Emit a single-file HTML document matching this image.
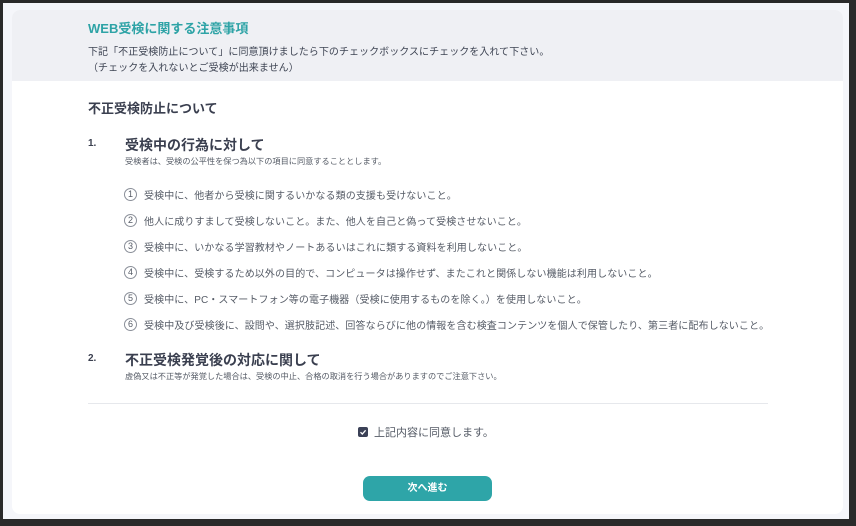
<!DOCTYPE html>
<html><head><meta charset="utf-8"><style>
*{margin:0;padding:0;box-sizing:border-box}
body{width:856px;height:526px;background:#2a2a2a;position:relative;overflow:hidden;font-family:"Liberation Sans","Noto Sans CJK JP",sans-serif;color:#3a3f4f}
.outer{position:absolute;left:3px;top:3px;width:846px;height:516px;background:#f5f6fa}
.card{position:absolute;left:12px;top:10px;width:831px;height:504px;background:#fff;border-radius:8px;overflow:hidden}
.hd{position:absolute;left:0;top:0;width:100%;height:71px;background:#eff0f4}
.a{position:absolute;white-space:nowrap}
.t{left:76px;top:8px;font-size:13px;font-weight:bold;color:#2ea3a6}
.s{font-size:10px;color:#3e4453;letter-spacing:0.05px}
.it{font-size:10px;color:#555b66;letter-spacing:0.1px;display:flex;align-items:center;height:16px}
.c{display:inline-block;width:13px;height:13px;border:1px solid #8a8f99;border-radius:50%;font-size:9px;text-align:center;line-height:11px;margin-right:7px;color:#555b66;flex:none}
.sm{font-size:8.2px;color:#555b66}
</style></head><body>
<div class="outer"></div>
<div class="card">
 <div class="hd"></div>
 <div class="a t">WEB受検に関する注意事項</div>
 <div class="a s" style="left:76px;top:33px">下記「不正受検防止について」に同意頂けましたら下のチェックボックスにチェックを入れて下さい。</div>
 <div class="a s" style="left:76px;top:49px">（チェックを入れないとご受検が出来ません）</div>
 <div class="a" style="left:76px;top:88px;font-size:13px;font-weight:bold">不正受検防止について</div>
 <div class="a" style="left:76px;top:128px;font-size:10px;font-weight:bold">1.</div>
 <div class="a" style="left:113px;top:125px;font-size:14px;font-weight:bold">受検中の行為に対して</div>
 <div class="a sm" style="left:113px;top:145px">受検者は、受検の公平性を保つ為以下の項目に同意することとします。</div>
 <div class="a it" style="left:112px;top:176px"><span class="c">1</span>受検中に、他者から受検に関するいかなる類の支援も受けないこと。</div>
 <div class="a it" style="left:112px;top:202px"><span class="c">2</span>他人に成りすまして受検しないこと。また、他人を自己と偽って受検させないこと。</div>
 <div class="a it" style="left:112px;top:228px"><span class="c">3</span>受検中に、いかなる学習教材やノートあるいはこれに類する資料を利用しないこと。</div>
 <div class="a it" style="left:112px;top:254px"><span class="c">4</span>受検中に、受検するため以外の目的で、コンピュータは操作せず、またこれと関係しない機能は利用しないこと。</div>
 <div class="a it" style="left:112px;top:280px"><span class="c">5</span>受検中に、PC・スマートフォン等の電子機器（受検に使用するものを除く。）を使用しないこと。</div>
 <div class="a it" style="left:112px;top:306px"><span class="c">6</span>受検中及び受検後に、設問や、選択肢記述、回答ならびに他の情報を含む検査コンテンツを個人で保管したり、第三者に配布しないこと。</div>
 <div class="a" style="left:76px;top:343px;font-size:10px;font-weight:bold">2.</div>
 <div class="a" style="left:113px;top:340px;font-size:14px;font-weight:bold">不正受検発覚後の対応に関して</div>
 <div class="a sm" style="left:113px;top:360px">虚偽又は不正等が発覚した場合は、受検の中止、合格の取消を行う場合がありますのでご注意下さい。</div>
 <div class="a" style="left:76px;top:393px;width:680px;height:1px;background:#e6e8ec"></div>
 <div class="a" style="left:346px;top:417px;width:10px;height:10px;background:#3b4157;border-radius:2px"><svg width="10" height="10" viewBox="0 0 10 10" style="display:block"><path d="M2.5 5.2 L4.3 7 L7.6 3.3" stroke="#fff" stroke-width="1.3" fill="none"/></svg></div>
 <div class="a" style="left:362px;top:414px;font-size:11px;color:#555b66">上記内容に同意します。</div>
 <div class="a" style="left:351px;top:466px;width:129px;height:25px;background:#2ea5a8;border-radius:7px;color:#fff;font-size:10px;font-weight:bold;text-align:center;line-height:25px">次へ進む</div>
</div>
</body></html>
